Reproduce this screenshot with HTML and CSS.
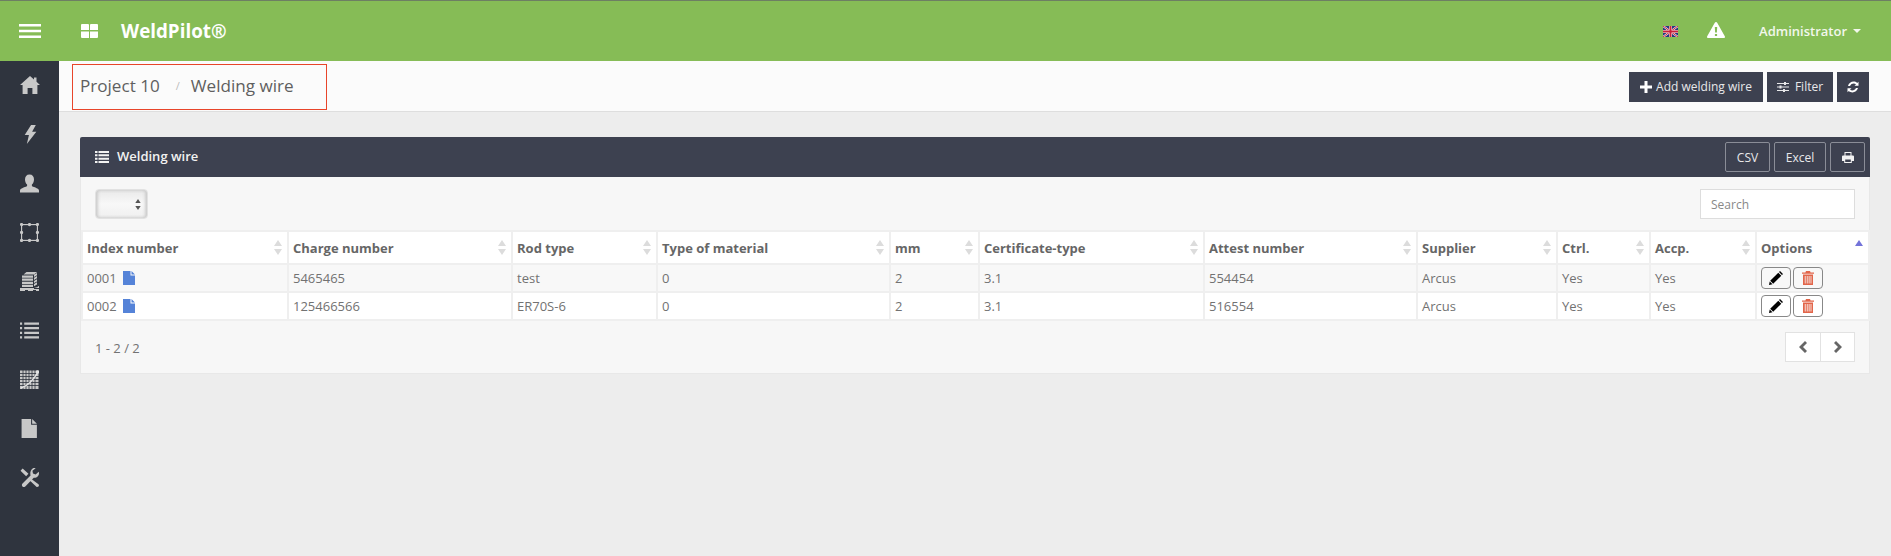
FILE: index.html
```html
<!DOCTYPE html>
<html lang="en">
<head>
<meta charset="utf-8">
<title>WeldPilot</title>
<link rel="stylesheet" href="styles.css">
</head>
<body>
<header class="topbar">
  <div class="burger-cell">
    <svg class="burger" viewBox="0 0 22 14"><path d="M0 0h22v2.400H0zM0 5.800h22v2.400H0zM0 11.600h22V14H0z"/></svg>
  </div>
  <svg class="grid-icon" viewBox="0 0 17 14"><path d="M1 0h6a1 1 0 0 1 1 1v5H0V1a1 1 0 0 1 1-1zM10 0h6a1 1 0 0 1 1 1v5H9V1a1 1 0 0 1 1-1zM0 7.500h8V14H1a1 1 0 0 1-1-1zM9 7.500h8V13a1 1 0 0 1-1 1H9z"/></svg>
  <div class="brand">WeldPilot®</div>
  <div class="topbar-right">
    <svg class="flag" viewBox="0 0 15 11">
      <rect width="15" height="11" fill="#27377f"/>
      <path d="M0 0l15 11M15 0L0 11" stroke="#f2f2f2" stroke-width="2"/>
      <path d="M0 0l15 11M15 0L0 11" stroke="#c9203a" stroke-width="1"/>
      <path d="M7.500 0v11M0 5.500h15" stroke="#f2f2f2" stroke-width="3"/>
      <path d="M7.500 0v11M0 5.500h15" stroke="#c9203a" stroke-width="2"/>
    </svg>
    <svg class="warn" viewBox="0 0 18 16"><path fill-rule="evenodd" d="M9 0c.5 0 .9.300 1.200.8l7.600 13.500c.5.800-.1 1.700-1 1.700H1.200c-.9 0-1.500-.9-1-1.700L7.800.8C8.100.3 8.500 0 9 0zM7.800 5l.3 5.500h1.800L10.200 5zM7.900 12v2h2.200v-2z"/></svg>
    <div class="user">Administrator<span class="caret"></span></div>
  </div>
</header>

<div class="layout">
  <nav class="sidebar">
    <a class="nav-item nav-home"><svg viewBox="0 0 20 18"><path d="M10 0l4 3.500V1.500h2.500v4.200L20 9h-2.600v9h-5v-6h-4.800v6h-5V9H0z"/></svg></a>
    <a class="nav-item"><svg class="nav-bolt" viewBox="0 0 12 18"><path d="M7 0h4.500L8 6.500h4L3 18l2-8.500H1z"/></svg></a>
    <a class="nav-item"><svg viewBox="0 0 19 18"><path d="M9.500 0c3 0 4.500 2.100 4.500 5 0 2.200-.9 4-2.100 5.100v1.500c0 .8 7.100 2 7.100 4.400v2H0v-2c0-2.400 7.100-3.600 7.100-4.400v-1.500C5.900 9 5 7.200 5 5c0-2.900 1.500-5 4.500-5z"/></svg></a>
    <a class="nav-item"><svg viewBox="0 0 18 18"><g fill="none" stroke="#c8c8c8" stroke-width="1.100"><rect x="1.500" y="1.500" width="15" height="15"/><circle cx="1.500" cy="1.500" r="1"/><circle cx="16.500" cy="1.500" r="1"/><circle cx="1.500" cy="16.500" r="1"/><circle cx="16.500" cy="16.500" r="1"/><circle cx="1.500" cy="9" r="1"/><circle cx="16.500" cy="9" r="1"/><circle cx="9" cy="1.500" r="1"/><circle cx="9" cy="16.500" r="1"/></g></svg></a>
    <a class="nav-item"><svg viewBox="0 0 19 19"><path d="M2 3.500h11v2.200H2zM2 6.600h11v2.200H2zM2 9.700h11v2.200H2zM2 12.800h11V15H2zM14 2.700l3-1.700v2.200l-3 1.700zM14 5.800l3-1.700v2.200l-3 1.700zM14 8.900l3-1.700v2.200l-3 1.700zM14 12l3-1.700v2.200l-3 1.700zM3.500 2.600L6.500 0H17.200L14 2.600zM0 16h19v-2l-1.300.5v.6L14 16v1h5v2h-3v-1h-3v1H8v-1H5v1H0z"/></svg></a>
    <a class="nav-item"><svg viewBox="0 0 18 15"><path d="M0 0h2v2H0zM4 0h14v2H4zM0 4.300h2v2H0zM4 4.300h14v2H4zM0 8.700h2v2H0zM4 8.700h14v2H4zM0 13h2v2H0zM4 13h14v2H4z"/></svg></a>
    <a class="nav-item"><svg viewBox="0 0 19 19"><rect y="0.500" width="18.500" height="18.500" fill="#c8c8c8"/><path d="M3 0v19M6 0v19M9 0v19M12 0v19M15 0v19M0 3.500h19M0 6.500h19M0 9.500h19M0 12.500h19M0 15.500h19" stroke="#2f343e" stroke-width="0.800"/><path d="M1 18C7 16 13 11 18 2" fill="none" stroke="#e4e4e4" stroke-width="1.500"/><circle cx="17.500" cy="2" r="1.800" fill="#e4e4e4"/></svg></a>
    <a class="nav-item"><svg viewBox="0 0 15 18"><path d="M0 0h9v5.500h5.500V18H0zM10 0l4.500 4.500H10z"/></svg></a>
    <a class="nav-item"><svg viewBox="0 0 18 18"><path d="M13.500 0c.6 0 1 .1 1.300.3l-3 2.400.5 2.600 2.500.8 2.900-2.500c.2.400.3.900.3 1.400 0 2.600-2.400 4.700-5 4.200L5 17.500c-.8.800-2 .8-2.700 0s-.7-2 .1-2.700L10 7c-.9-3.500 1-7 3.500-7zM.5 2.500L2.500.5 8 5.500 5.800 7.800zM10.800 10.500l6.700 5c.7.700.5 1.600-.1 2.100s-1.500.6-2.100-.1L9.500 12z"/></svg></a>
  </nav>

  <main class="main">
    <div class="titlebar">
      <div class="crumbs">
        <span class="crumb">Project 10</span>
        <span class="crumb-sep">/</span>
        <span class="crumb">Welding wire</span>
      </div>
      <div class="actions">
        <button class="act act-add"><svg class="ic-plus" viewBox="0 0 12 12"><path d="M4.500 0h3v4.500H12v3H7.500V12h-3V7.500H0v-3h4.500z"/></svg>Add welding wire</button>
        <button class="act act-filter"><svg class="ic-sliders" viewBox="0 0 12 10"><path d="M0 1h12v1H0zM0 4.500h12v1H0zM0 8h12v1H0z"/><path d="M7 0h2v3H7zM2.500 3.500h2v3h-2zM6 7h2v3H6z"/></svg>Filter</button>
        <button class="act act-refresh"><svg class="ic-refresh" viewBox="0 0 12 12"><path d="M11.500.8v4H7.500l1.500-1.500C7.300 1.900 4 2.500 3 5H1C2 1 7-.9 10.200 2zM.5 11.200v-4h4L3 8.700c1.700 1.400 5 .8 6-1.700h2c-1 4-6 5.900-9.200 3z"/></svg></button>
      </div>
    </div>

    <section class="panel">
      <div class="panel-head">
        <svg class="ic-list" viewBox="0 0 14 12"><path d="M0 0h2.500v2H0zM3.500 0H14v2H3.500zM0 3.300h2.500v2H0zM3.500 3.300H14v2H3.500zM0 6.700h2.500v2H0zM3.500 6.700H14v2H3.500zM0 10h2.500v2H0zM3.500 10H14v2H3.500z"/></svg>
        <h2 class="panel-title">Welding wire</h2>
        <div class="head-tools">
          <button class="tool tool-csv">CSV</button>
          <button class="tool tool-excel">Excel</button>
          <button class="tool tool-print"><svg class="ic-print" viewBox="0 0 12 11"><path fill-rule="evenodd" d="M2.500 0h7v3.500H11a1 1 0 0 1 1 1V9H9.800v2H2.200V9H0V4.500a1 1 0 0 1 1-1h1.500zM3.500 1v2.500h5V1zM3.200 7.500V10h5.600V7.500z"/></svg></button>
        </div>
      </div>

      <div class="panel-controls">
        <div class="page-size"><svg class="updown" viewBox="0 0 6 11"><path d="M3 0l2.700 4H.3zM3 11L.3 7h5.400z"/></svg></div>
        <input class="search" type="text" placeholder="Search">
      </div>

      <table class="grid">
        <colgroup>
          <col class="c1"><col class="c2"><col class="c3"><col class="c4"><col class="c5"><col class="c6"><col class="c7"><col class="c8"><col class="c9"><col class="c10"><col class="c11">
        </colgroup>
        <thead>
          <tr>
            <th><div class="th-in">Index number<svg class="sort" viewBox="0 0 8 15"><path d="M4 0l4 6H0zM4 15L0 9h8z"/></svg></div></th>
            <th><div class="th-in">Charge number<svg class="sort" viewBox="0 0 8 15"><path d="M4 0l4 6H0zM4 15L0 9h8z"/></svg></div></th>
            <th><div class="th-in">Rod type<svg class="sort" viewBox="0 0 8 15"><path d="M4 0l4 6H0zM4 15L0 9h8z"/></svg></div></th>
            <th><div class="th-in">Type of material<svg class="sort" viewBox="0 0 8 15"><path d="M4 0l4 6H0zM4 15L0 9h8z"/></svg></div></th>
            <th><div class="th-in">mm<svg class="sort" viewBox="0 0 8 15"><path d="M4 0l4 6H0zM4 15L0 9h8z"/></svg></div></th>
            <th><div class="th-in">Certificate-type<svg class="sort" viewBox="0 0 8 15"><path d="M4 0l4 6H0zM4 15L0 9h8z"/></svg></div></th>
            <th><div class="th-in">Attest number<svg class="sort" viewBox="0 0 8 15"><path d="M4 0l4 6H0zM4 15L0 9h8z"/></svg></div></th>
            <th><div class="th-in">Supplier<svg class="sort" viewBox="0 0 8 15"><path d="M4 0l4 6H0zM4 15L0 9h8z"/></svg></div></th>
            <th><div class="th-in">Ctrl.<svg class="sort" viewBox="0 0 8 15"><path d="M4 0l4 6H0zM4 15L0 9h8z"/></svg></div></th>
            <th><div class="th-in">Accp.<svg class="sort" viewBox="0 0 8 15"><path d="M4 0l4 6H0zM4 15L0 9h8z"/></svg></div></th>
            <th><div class="th-in">Options<svg class="sort-active" viewBox="0 0 8 6"><path d="M4 0l4 6H0z"/></svg></div></th>
          </tr>
        </thead>
        <tbody>
          <tr class="odd">
            <td>0001<svg class="ic-doc" viewBox="0 0 12 14"><path d="M0 0h7.500v4.500H12V14H0zM8.500 0L12 3.500H8.500z"/></svg></td>
            <td>5465465</td><td>test</td><td>0</td><td>2</td><td>3.1</td><td>554454</td><td>Arcus</td><td>Yes</td><td>Yes</td>
            <td class="opts">
              <button class="opt"><svg class="ic-pen" viewBox="0 0 14 14"><path d="M11 0L14 3 13 4 10 1zM9.300 1.700L12.300 4.700 4.200 12.800 1.200 9.800zM.7 10.500L3.500 13.300 0 14z"/></svg></button>
              <button class="opt"><svg class="ic-trash" viewBox="0 0 12 14"><path d="M4 0h4l.6 1.500H12v1.300H0V1.500h3.400zM1 3.500h10V14H1zM2.800 5v7.500h.8V5zM4.800 5v7.500h.8V5zM6.700 5v7.500h.8V5zM8.600 5v7.500h.8V5z" fill-rule="evenodd"/></svg></button>
            </td>
          </tr>
          <tr>
            <td>0002<svg class="ic-doc" viewBox="0 0 12 14"><path d="M0 0h7.500v4.500H12V14H0zM8.500 0L12 3.500H8.500z"/></svg></td>
            <td>125466566</td><td>ER70S-6</td><td>0</td><td>2</td><td>3.1</td><td>516554</td><td>Arcus</td><td>Yes</td><td>Yes</td>
            <td class="opts">
              <button class="opt"><svg class="ic-pen" viewBox="0 0 14 14"><path d="M11 0L14 3 13 4 10 1zM9.300 1.700L12.300 4.700 4.200 12.800 1.200 9.800zM.7 10.500L3.500 13.300 0 14z"/></svg></button>
              <button class="opt"><svg class="ic-trash" viewBox="0 0 12 14"><path d="M4 0h4l.6 1.500H12v1.300H0V1.500h3.400zM1 3.500h10V14H1zM2.800 5v7.500h.8V5zM4.800 5v7.500h.8V5zM6.700 5v7.500h.8V5zM8.600 5v7.500h.8V5z" fill-rule="evenodd"/></svg></button>
            </td>
          </tr>
        </tbody>
      </table>

      <div class="panel-foot">
        <span class="count">1 - 2 / 2</span>
        <div class="pager">
          <button class="page-btn"><svg class="ic-chev" viewBox="0 0 8 12"><path d="M6 0l2 2-4 4 4 4-2 2-6-6z"/></svg></button>
          <button class="page-btn"><svg class="ic-chev" viewBox="0 0 8 12"><path d="M2 0L0 2l4 4-4 4 2 2 6-6z"/></svg></button>
        </div>
      </div>
    </section>
  </main>
</div>
</body>
</html>
```

FILE: styles.css
```css
* { box-sizing: border-box; }
html, body { margin: 0; height: 100%; }
body {
  background: #ededed;
  font-family: "Open Sans", "Liberation Sans", sans-serif;
  font-size: 13px;
  color: #666;
  overflow: hidden;
}
button { font-family: inherit; cursor: pointer; padding: 0; }

.topbar {
  display: flex;
  align-items: center;
  height: 61px;
  background: #86bc56;
  border-top: 1px solid #6d7f63;
  color: #fff;
}
.burger-cell { width: 59px; display: flex; justify-content: center; }
.burger { width: 22px; height: 14px; fill: #fff; }
.grid-icon { width: 17px; height: 14px; fill: #fff; margin-left: 22px; }
.brand { margin-left: 23px; font-size: 18.800px; font-weight: 700; }
.topbar-right { margin-left: auto; display: flex; align-items: center; padding-right: 30px; }
.flag { width: 15px; height: 11px; margin-right: 29px; }
.warn { width: 18px; height: 16px; fill: #fff; margin-right: 34px; margin-bottom: 3px; }
.user { font-size: 13px; font-weight: 600; color: #f2f7ec; display: flex; align-items: center; }
.caret {
  margin-left: 6px;
  border-top: 4px solid #f2f7ec;
  border-left: 4px solid transparent;
  border-right: 4px solid transparent;
}

.layout { display: flex; height: calc(100vh - 61px); }
.sidebar { width: 59px; flex: none; background: #2f343e; }
.nav-item { display: flex; align-items: center; justify-content: center; height: 49px; }
.nav-item svg { width: 19px; height: 19px; fill: #c8c8c8; }
.nav-item .nav-bolt { width: 14px; }
.nav-home { padding-bottom: 2px; }
.nav-home svg { width: 20px; height: 18px; }

.main { flex: 1; min-width: 0; }
.titlebar {
  display: flex;
  align-items: center;
  justify-content: space-between;
  height: 51px;
  padding: 0 22px 0 13px;
  background: #fbfbfb;
  border-bottom: 1px solid #dedede;
}
.crumbs {
  display: flex;
  align-items: center;
  width: 255px;
  height: 46px;
  margin-top: 2px;
  padding: 0 0 4px 7px;
  border: 1px solid #e8452a;
  font-size: 17.100px;
  color: #5f5f5f;
}
.crumb-sep { margin: 0 11px 0 16px; font-size: 11px; color: #bbb; }
.actions { display: flex; gap: 4px; margin-top: 1px; }
.act {
  display: flex;
  align-items: center;
  justify-content: center;
  height: 30px;
  border: 0;
  background: #3d4150;
  color: #e8e8ea;
  font-size: 12px;
}
.act-add { width: 134px; }
.act-filter { width: 66px; }
.act-refresh { width: 32px; }
.ic-plus { width: 12px; height: 12px; fill: #fff; margin-right: 4px; }
.ic-sliders { width: 12px; height: 10px; fill: #e8e8ea; margin-right: 6px; }
.ic-refresh { width: 12px; height: 12px; fill: #fff; }

.panel {
  margin: 25px 21px 0 21px;
  background: #f7f7f7;
  border: 1px solid #e8e8e8;
  border-top: 0;
  border-radius: 2px 2px 0 0;
}
.panel-head {
  display: flex;
  align-items: center;
  height: 40px;
  margin: 0 -1px;
  padding: 0 5px 0 15px;
  background: #3d4150;
  color: #f2f2f2;
  border-radius: 2px 2px 0 0;
}
.ic-list { width: 14px; height: 12px; fill: #f2f2f2; margin-right: 8px; }
.panel-title { margin: 0 0 2px; font-size: 13px; font-weight: 600; }
.head-tools { margin-left: auto; display: flex; gap: 4px; }
.tool {
  display: flex;
  align-items: center;
  justify-content: center;
  height: 30px;
  background: transparent;
  border: 1px solid #8a8d97;
  border-radius: 2px;
  color: #e8e8ea;
  font-size: 12px;
}
.tool-csv { width: 45px; }
.tool-excel { width: 52px; }
.tool-print { width: 35px; }
.ic-print { width: 12px; height: 11px; fill: #f2f2f2; }

.panel-controls {
  display: flex;
  justify-content: space-between;
  padding: 12px 14px 11px 14px;
}
.page-size {
  display: flex;
  align-items: center;
  justify-content: flex-end;
  width: 53px;
  height: 30px;
  padding-right: 6px;
  border: 1px solid #e2e2e2;
  border-radius: 4px;
  background: linear-gradient(#e9e9e9, #f8f8f8 50%, #efefef);
  box-shadow: inset 2px 0 3px #ccc, inset -2px 0 3px #ccc;
}
.updown { width: 6px; height: 11px; fill: #555; }
.search {
  width: 155px;
  height: 30px;
  padding: 0 10px;
  border: 1px solid #ddd;
  background: #fff;
  font: 12px "Open Sans", sans-serif;
  color: #666;
}
.search::placeholder { color: #888; opacity: 1; }

.grid {
  table-layout: fixed;
  width: 1789px;
  border-collapse: separate;
  border-spacing: 2px;
  background: #efefef;
}
.c1 { width: 204px; } .c2 { width: 222px; } .c3 { width: 143px; } .c4 { width: 231px; }
.c5 { width: 87px; } .c6 { width: 223px; } .c7 { width: 211px; } .c8 { width: 138px; }
.c9 { width: 91px; } .c10 { width: 104px; } .c11 { width: 111px; }
.grid th {
  height: 31px;
  padding: 0 4px;
  background: #fff;
  text-align: left;
  font-size: 13px;
  font-weight: 700;
  color: #666;
}
.th-in { display: flex; align-items: center; justify-content: space-between; padding-right: 1px; }
.sort { width: 8px; height: 15px; fill: #dcdcdc; }
.sort-active { width: 8px; height: 6px; fill: #7373d9; margin-bottom: 9px; }
.grid td {
  height: 26px;
  padding: 0 4px;
  background: #fff;
  font-size: 13px;
  color: #727272;
  white-space: nowrap;
}
.grid .odd td { background: #f8f8f8; }
.ic-doc { width: 12px; height: 14px; fill: #5583d8; margin-left: 6px; vertical-align: -2px; }
.grid .opts { font-size: 0; padding: 0 4px; }
.opt {
  width: 30px;
  height: 22px;
  margin-right: 2px;
  display: inline-flex;
  align-items: center;
  justify-content: center;
  background: transparent;
  border: 1px solid #888;
  border-radius: 4px;
  vertical-align: middle;
}
.ic-pen { width: 14px; height: 14px; fill: #000; }
.ic-trash { width: 12px; height: 14px; fill: #e2654a; }

.panel-foot {
  display: flex;
  align-items: center;
  justify-content: space-between;
  height: 52px;
  padding: 0 14px;
}
.count { margin-top: 1px; font-size: 13px; color: #727272; }
.pager { display: flex; height: 30px; border: 1px solid #e2e2e2; background: #fff; }
.page-btn {
  display: flex;
  align-items: center;
  justify-content: center;
  width: 34px;
  border: 0;
  background: transparent;
}
.page-btn + .page-btn { border-left: 1px solid #e2e2e2; }
.ic-chev { width: 8px; height: 12px; fill: #666; }
```
